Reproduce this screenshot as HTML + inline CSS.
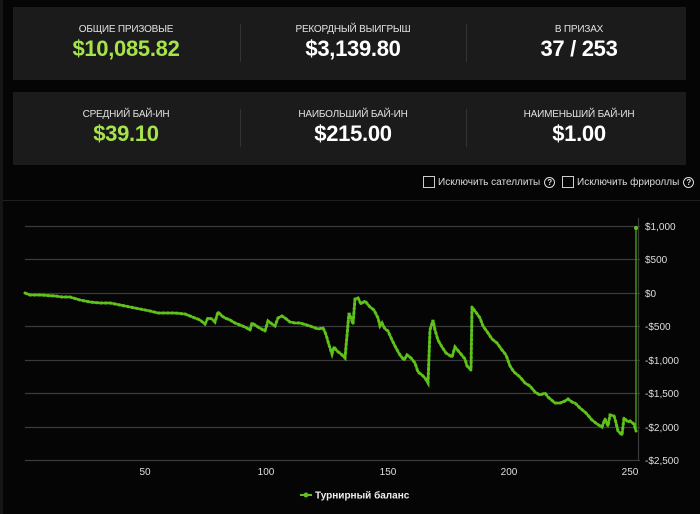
<!DOCTYPE html>
<html><head><meta charset="utf-8"><style>
body{margin:0;width:700px;height:514px;background:#050505;font-family:"Liberation Sans",sans-serif;position:relative;overflow:hidden;color:#fff}
.strip{position:absolute;left:0;top:0;width:3px;height:514px;background:#161616}
.card{position:absolute;left:13px;width:673px;height:73px;background:#1b1b1b}
.col{position:absolute;top:0;width:226px;height:73px;text-align:center}
.lab{position:absolute;top:17px;left:0;right:0;font-size:10px;color:#e0e0e0;letter-spacing:-0.2px}
.val{position:absolute;top:29px;left:0;right:0;font-size:22px;font-weight:bold;letter-spacing:-0.3px}
.g{color:#a6e34a}
.div{position:absolute;top:17px;width:1px;height:38px;background:#333}
.chk{position:absolute;top:176px;font-size:10px;color:#ddd;display:flex;align-items:center;white-space:nowrap}
.box{width:10px;height:10px;border:1px solid #ccc;margin-right:3px}
.q{width:9px;height:9px;border:1.3px solid #ddd;border-radius:50%;font-size:8px;line-height:9px;text-align:center;margin-left:4px;font-weight:bold}
</style></head><body>
<div class="strip"></div>
<div class="card" style="top:7px">
<div class="col" style="left:0"><div class="lab">ОБЩИЕ ПРИЗОВЫЕ</div><div class="val g">$10,085.82</div></div>
<div class="div" style="left:227px"></div>
<div class="col" style="left:227px"><div class="lab">РЕКОРДНЫЙ ВЫИГРЫШ</div><div class="val">$3,139.80</div></div>
<div class="div" style="left:453px"></div>
<div class="col" style="left:453px"><div class="lab">В ПРИЗАХ</div><div class="val">37 / 253</div></div>
</div>
<div class="card" style="top:92px">
<div class="col" style="left:0"><div class="lab">СРЕДНИЙ БАЙ-ИН</div><div class="val g">$39.10</div></div>
<div class="div" style="left:227px"></div>
<div class="col" style="left:227px"><div class="lab">НАИБОЛЬШИЙ БАЙ-ИН</div><div class="val">$215.00</div></div>
<div class="div" style="left:453px"></div>
<div class="col" style="left:453px"><div class="lab">НАИМЕНЬШИЙ БАЙ-ИН</div><div class="val">$1.00</div></div>
</div>
<div class="chk" style="left:423px"><div class="box"></div>Исключить сателлиты<div class="q">?</div></div>
<div class="chk" style="left:562px"><div class="box"></div>Исключить фрироллы<div class="q">?</div></div>
<svg width="700" height="514" style="position:absolute;left:0;top:0" font-family="Liberation Sans, sans-serif">
<line x1="3" y1="200.5" x2="700" y2="200.5" stroke="#202020"/>
<g stroke="#3a3a3a" stroke-width="1.2">
<line x1="25" y1="226.5" x2="640" y2="226.5"/><line x1="25" y1="259.5" x2="640" y2="259.5"/>
<line x1="25" y1="293.5" x2="640" y2="293.5"/><line x1="25" y1="326.5" x2="640" y2="326.5"/>
<line x1="25" y1="360.5" x2="640" y2="360.5"/><line x1="25" y1="393.5" x2="640" y2="393.5"/>
<line x1="25" y1="427.5" x2="640" y2="427.5"/><line x1="25" y1="460.5" x2="640" y2="460.5"/>
<line x1="638.5" y1="218" x2="638.5" y2="461"/>
</g>
<g fill="#ddd" font-size="10">
<text x="645" y="230">$1,000</text><text x="645" y="263">$500</text><text x="645" y="297">$0</text>
<text x="645" y="330">-$500</text><text x="645" y="364">-$1,000</text><text x="645" y="397">-$1,500</text>
<text x="645" y="431">-$2,000</text><text x="645" y="464">-$2,500</text>
<g text-anchor="middle"><text x="145" y="475">50</text><text x="266" y="475">100</text><text x="388" y="475">150</text><text x="509" y="475">200</text><text x="630" y="475">250</text></g>
</g>
<polyline fill="none" stroke="#4fa815" stroke-width="1.3" points="25,293 30,295 40,295 55,296 62,297 70,297 80,300 90,302 100,303 110,303 120,305 130,307 140,309 150,311 158,313 165,313 175,313 185,314 190,316 200,320 205,324 208,318 212,319 215,322 218,312 222,316 225,318 230,320 235,323 240,325 245,327 250,330 252,323 258,327 265,331 268,321 272,324 275,326 278,318 282,316 285,318 290,322 295,323 300,323 310,326 318,329 323,328 325,332 327,338 329,345 332,354 334,347 337,351 341,354 345,358 349,313 351,318 353,324 355,299 358,298 361,304 365,301 370,307 374,310 378,318 380,326 382,323 385,329 388,331 392,340 396,348 400,355 404,360 407,355 411,358 415,363 418,372 422,375 425,378 428,383 430,330 433,320 435,330 438,340 442,347 446,353 452,357 455,347 460,353 465,359 467,366 471,370 472,307 475,311 480,318 483,326 488,333 492,339 497,343 502,350 506,355 510,366 514,372 520,377 525,383 530,386 535,392 540,395 545,393 548,397 555,403 560,403 565,401 568,399 572,402 575,403 580,408 586,413 592,420 597,424 602,427 605,419 608,426 610,415 614,416 615,419 618,431 622,435 624,418 628,422 630,421 634,424 636,431 636,228"/>
<polyline fill="none" stroke="#5fc21a" stroke-width="3" stroke-dasharray="2 2.5" stroke-linecap="round" points="25,293 30,295 40,295 55,296 62,297 70,297 80,300 90,302 100,303 110,303 120,305 130,307 140,309 150,311 158,313 165,313 175,313 185,314 190,316 200,320 205,324 208,318 212,319 215,322 218,312 222,316 225,318 230,320 235,323 240,325 245,327 250,330 252,323 258,327 265,331 268,321 272,324 275,326 278,318 282,316 285,318 290,322 295,323 300,323 310,326 318,329 323,328 325,332 327,338 329,345 332,354 334,347 337,351 341,354 345,358 349,313 351,318 353,324 355,299 358,298 361,304 365,301 370,307 374,310 378,318 380,326 382,323 385,329 388,331 392,340 396,348 400,355 404,360 407,355 411,358 415,363 418,372 422,375 425,378 428,383 430,330 433,320 435,330 438,340 442,347 446,353 452,357 455,347 460,353 465,359 467,366 471,370 472,307 475,311 480,318 483,326 488,333 492,339 497,343 502,350 506,355 510,366 514,372 520,377 525,383 530,386 535,392 540,395 545,393 548,397 555,403 560,403 565,401 568,399 572,402 575,403 580,408 586,413 592,420 597,424 602,427 605,419 608,426 610,415 614,416 615,419 618,431 622,435 624,418 628,422 630,421 634,424 636,431"/>
<circle cx="636" cy="228" r="2" fill="#5fc21a"/>
<line x1="300" y1="495" x2="312" y2="495" stroke="#5fc21a" stroke-width="2"/>
<circle cx="306" cy="495" r="2.5" fill="#5fc21a"/>
<text x="315" y="498.5" fill="#eee" font-size="10" font-weight="bold">Турнирный баланс</text>
</svg>
</body></html>
